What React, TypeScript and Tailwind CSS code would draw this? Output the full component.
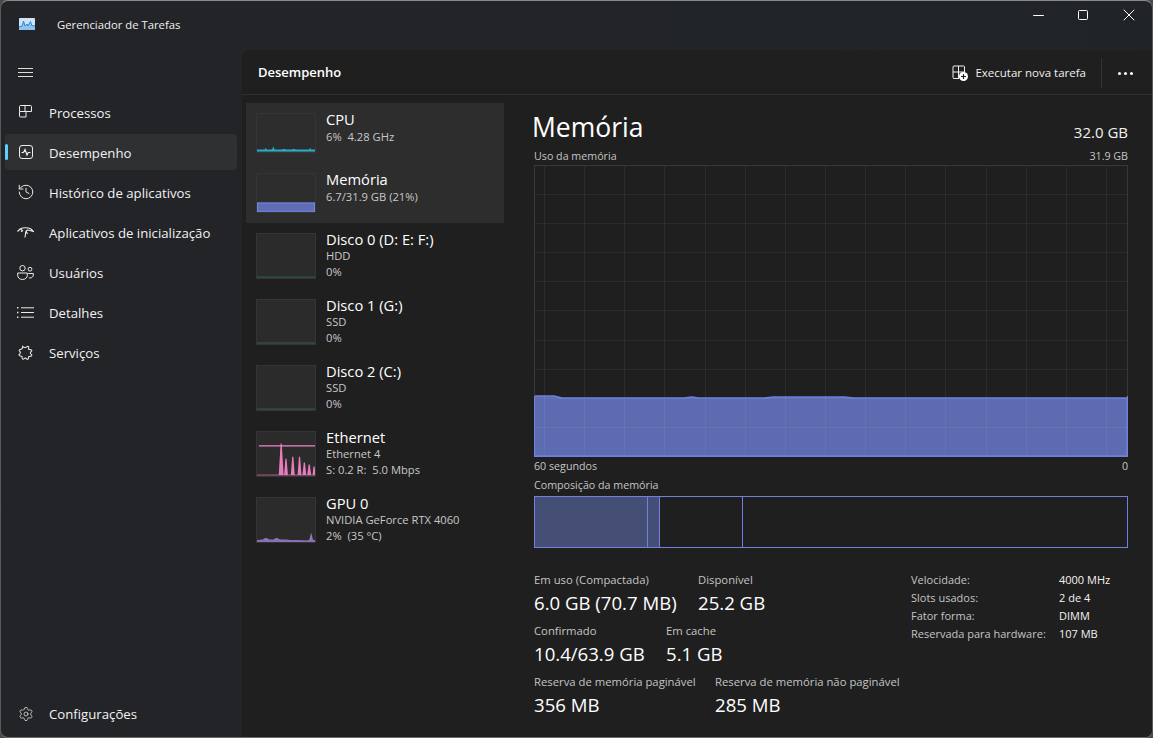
import React from "react";
import { History, Settings, Minus, X } from "lucide-react";

const font = "font-['Open_Sans','Noto_Sans',sans-serif]";

// Sidebar icons that lucide does not have in this shape
const ProcessIcon = () => (
  <svg width="13" height="13" viewBox="0 0 13 13" fill="none" stroke="currentColor" strokeWidth="1" className="mb-[1px]">
    <path d="M.5 6.5v-5a1 1 0 0 1 1-1H6v6zM6 .5h5.5a1 1 0 0 1 1 1v5H6M.5 6.5V11a1 1 0 0 0 1 1H7V6.5" />
  </svg>
);

const PerfIcon = () => (
  <svg width="14" height="14" viewBox="0 0 14 14" fill="none" stroke="currentColor" strokeWidth="1">
    <rect x=".5" y=".5" width="13" height="13" rx="2.5" />
    <path d="M2.5 7.5h2l1.5-3 2 5.5 1.3-2.5h2.2" strokeWidth="1.2" />
  </svg>
);

const StartupIcon = () => (
  <svg width="17" height="11" viewBox="0 0 17 11" fill="none" stroke="currentColor" strokeWidth="1.1">
    <path d="M.5 4.5 3 2C6 .3 11 .3 14 2l2.5 2.5-3.5-.9C11 2.6 9.3 3 8.8 4.6L8 10.5M9.2 4.5l1.3 2.6" />
    <path d="M3.5 2 5.5 3.8 4 4.8" />
  </svg>
);

const UsersIcon = () => (
  <svg width="17" height="15" viewBox="0 0 17 15" fill="none" stroke="currentColor" strokeWidth="1">
    <circle cx="5.5" cy="3.2" r="2.7" />
    <circle cx="13" cy="4.2" r="1.9" />
    <path d="M.7 8h9.6v2.3c0 2.4-2 4.2-4.8 4.2S.7 12.7.7 10.3zM11.3 8.5h5V10c0 1.7-1.5 3-3.4 3-.4 0-.8 0-1.1-.2" />
  </svg>
);

const DetailsIcon = () => (
  <svg width="17" height="11" viewBox="0 0 17 11" fill="none" stroke="currentColor">
    <path d="M4 .8h13M4 5.5h13M4 10.2h13" />
    <path d="M0 .8h1.4M0 5.5h1.4M0 10.2h1.4" strokeWidth="1.6" />
  </svg>
);

const ServicesIcon = () => (
  <svg width="15" height="15" viewBox="0 0 16 16" fill="none" stroke="currentColor" strokeWidth="1.1">
    <path d="M5 1.5c.7.9 1.7 1.4 3 1.2l2.6-1.2.9.5-.3 2.4c.4.6 2 .7 3 .8l.6 1c-.6.8-1.6 1.3-1.6 2.3s1 1.4 1.6 2.2l-.5 1-2.9.8-.4 2.4-1 .4-2-1.4c-.6-.2-1.4.6-2.4 1.3l-1-.4-.4-2.6-2.7-.8-.5-1C1.6 9.400 2.600 9 2.600 8.100S1.700 6.600 1.200 5.900l.5-1 2.700-.8z" />
  </svg>
);

const NewTaskIcon = () => (
  <svg width="16" height="16" viewBox="0 0 16 16" fill="none">
    <path d="M1 7V2a1 1 0 0 1 1-1h9.5a1 1 0 0 1 1 1v5M1 7h11.5M1 7v5.5a1 1 0 0 0 1 1h5M6.5 1v12.5" stroke="currentColor" />
    <circle cx="11.5" cy="11.5" r="4.5" fill="#fff" />
    <path d="M11.5 9v5M9 11.5h5" stroke="#1f1f1f" strokeWidth="1.2" />
  </svg>
);

const AppLogo = () => (
  <svg width="16" height="12" viewBox="0 0 16 12">
    <rect width="16" height="12" fill="#cfe4f5" rx="1" />
    <path d="M0 9 3 8l1.5-5L6 8l2-2 1 2 2.5-4.5L13 8l3-.5V12H0z" fill="#8ec5ee" />
    <path d="M0 9 3 8l1.5-5L6 8l2-2 1 2 2.5-4.5L13 8l3-.5" fill="none" stroke="#2f87d8" strokeWidth="1" />
  </svg>
);

const navItems = [
  { label: "Processos", icon: <ProcessIcon /> },
  { label: "Desempenho", icon: <PerfIcon />, active: true },
  { label: "Histórico de aplicativos", icon: <History size={18} strokeWidth={1.3} /> },
  { label: "Aplicativos de inicialização", icon: <StartupIcon /> },
  { label: "Usuários", icon: <UsersIcon /> },
  { label: "Detalhes", icon: <DetailsIcon /> },
  { label: "Serviços", icon: <ServicesIcon /> },
];

function Thumb({
  h,
  children,
  line,
  clear,
}: {
  h: string;
  children?: React.ReactNode;
  line: string;
  clear?: boolean;
}) {
  return (
    <div className={`w-[60px] ${h} shrink-0 border border-[#353535] ${clear ? "" : "bg-[#2b2b2b]"}`}>
      <svg className="block h-full w-full" viewBox="0 0 60 46" preserveAspectRatio="none">
        {children}
        <path d="M0 45h60" stroke={line} strokeWidth="1" opacity="0.7" />
      </svg>
    </div>
  );
}

const ethSpikes = [
  [25, 12, 2.5],
  [30, 28, 2],
  [37, 26, 2],
  [44, 26, 2],
  [49, 32, 2],
  [54, 34, 2],
  [59, 36, 1.5],
];

const rows = [
  {
    title: "CPU",
    lines: ["6%  4.28 GHz"],
    selected: true,
    h: "h-[60px]",
    thumbH: "h-[40px]",
    line: "#2fb4d0",
    shape: <path d="M0 45V43h8l1-2 1 2h5l1-1 1-3 1 4h8l2-1 2 1h6l2-1 2 1h14l1-2 1 2h4v2z" fill="#2fa9c6" />,
  },
  {
    title: "Memória",
    lines: ["6.7/31.9 GB (21%)"],
    selected: true,
    h: "h-[60px]",
    thumbH: "h-[40px]",
    line: "#7484e0",
    shape: <rect x="0.5" y="35" width="59" height="11" fill="#5f6db3" stroke="#7484e0" strokeWidth="1.4" />,
  },
  { title: "Disco 0 (D: E: F:)", lines: ["HDD", "0%"], line: "#3d7a6a" },
  { title: "Disco 1 (G:)", lines: ["SSD", "0%"], line: "#3d7a6a" },
  { title: "Disco 2 (C:)", lines: ["SSD", "0%"], line: "#3d7a6a" },
  {
    title: "Ethernet",
    lines: ["Ethernet 4", "S: 0.2 R:  5.0 Mbps"],
    line: "#e77dbd",
    shape: (
      <>
        {ethSpikes.map(([x, top, w]) => (
          <path key={x} d={`M${x - w} 45L${x - 0.6} ${top}h1.2L${x + w} 45z`} fill="#e77dbd" />
        ))}
        <path d="M2 14.5h58" stroke="#f285cb" strokeWidth="1.5" />
      </>
    ),
  },
  {
    title: "GPU 0",
    lines: ["NVIDIA GeForce RTX 4060", "2%  (35 °C)"],
    line: "#7d6aa8",
    shape: <path d="M0 46V44l6-.5 3-2 4 2 4 0 3-2 4 2 6 0 5 .5 8 0 8 .5 3-.5 2-8 2 8h2v2z" fill="#8e75bd" />,
  },
];

const AREA =
  "M0 231 L20 231 L24 232 L28 233 L150 233 L158 232 L164 233 L230 233 L240 232 L310 232 L320 233 L593 233 L593 291 L0 291 Z";

function MemChart() {
  const vs = [10, 50, 90, 130, 171, 211, 251, 291, 331, 371, 411, 452, 492, 532, 572];
  const hs = [29, 58, 87, 116, 145, 175, 204, 233, 262];
  return (
    <svg className="block h-[292px] w-full" viewBox="0 0 594 292">
      <rect width="594" height="292" fill="#1f1f1f" />
      <path d={AREA} fill="#5d6bb0" />
      {vs.map((x) => (
        <path key={x} d={`M${x + 0.5} 0V292`} stroke="#ffffff" strokeOpacity="0.055" />
      ))}
      {hs.map((y) => (
        <path key={y} d={`M0 ${y + 0.5}H594`} stroke="#ffffff" strokeOpacity="0.055" />
      ))}
      <path d={AREA} fill="none" stroke="#7080dc" strokeWidth="1.4" />
      <rect x="0.5" y="0.5" width="593" height="291" fill="none" stroke="#383838" />
      <path d="M0.5 231V291.5H593.5V231" fill="none" stroke="#7080dc" strokeWidth="1.2" />
    </svg>
  );
}

function Stat({ label, value, w }: { label: string; value: string; w: string }) {
  return (
    <div className={w}>
      <div className="text-[11.3px] leading-[16px] whitespace-nowrap text-[#c4c4c4]">{label}</div>
      <div className="mt-[3px] text-[18.6px] leading-[24px] whitespace-nowrap text-white">{value}</div>
    </div>
  );
}

const specs = [
  ["Velocidade:", "4000 MHz"],
  ["Slots usados:", "2 de 4"],
  ["Fator forma:", "DIMM"],
  ["Reservada para hardware:", "107 MB"],
];

export default function App() {
  return (
    <div className={`${font} h-[738px] w-[1153px] overflow-hidden bg-[#4a4a4a]`}>
      <div className="flex h-full w-full flex-col overflow-hidden rounded-[8px] border border-x-[#5a5a5a] border-t-[#8a8a8a] border-b-[#6a6a6a] bg-gradient-to-r from-[#232427] to-[#202428] text-white">
        {/* title bar */}
        <div className="flex h-[49px] shrink-0 items-start">
          <div className="mt-[17px] ml-[18px]">
            <AppLogo />
          </div>
          <div className="mt-[15px] ml-[22px] text-[11.3px] leading-[18px] text-[#f0f0f0]">Gerenciador de Tarefas</div>
          <div className="ml-auto flex items-center pt-[4px]">
            <Minus size={17} strokeWidth={1.4} className="mr-[31px]" />
            <div className="mr-[31px] h-[10px] w-[10px] rounded-[1.5px] border border-white" />
            <X size={20} strokeWidth={1.2} className="mr-[13px]" />
          </div>
        </div>

        <div className="flex min-h-0 flex-1">
          {/* nav */}
          <nav className="flex w-[241px] shrink-0 flex-col">
            <div className="mt-[14px] ml-[17px] flex h-[16px] w-[15px] flex-col justify-center gap-[3px]">
              <div className="h-px bg-[#dcdcdc]" />
              <div className="h-px bg-[#dcdcdc]" />
              <div className="h-px bg-[#dcdcdc]" />
            </div>
            <div className="mt-[14px] flex flex-col gap-[4px] pr-[5px] pl-[4px]">
              {navItems.map((it) => (
                <div
                  key={it.label}
                  className={`relative flex h-[36px] items-center rounded-[4px] ${it.active ? "bg-[#2f3032]" : ""}`}
                >
                  {it.active && <div className="absolute top-[10px] left-0 h-[16px] w-[3px] rounded-full bg-[#60cdff]" />}
                  <div className="mr-[3px] flex w-[41px] justify-center text-[#ececec]">{it.icon}</div>
                  <span className="pt-[3px] text-[13.2px] text-[#f2f2f2]">{it.label}</span>
                </div>
              ))}
            </div>
            <div className="mt-auto mb-[5px] flex h-[36px] items-center pl-[4px]">
              <div className="mr-[3px] flex w-[41px] justify-center text-[#ececec]">
                <Settings size={16} strokeWidth={1.1} />
              </div>
              <span className="pt-[1px] text-[13.2px] text-[#f2f2f2]">Configurações</span>
            </div>
          </nav>

          {/* content */}
          <main className="flex min-w-0 flex-1 flex-col rounded-tl-[8px] bg-[#1f1f1f]">
            <header className="flex h-[45px] shrink-0 items-center border-b border-[#2e2e2e] pt-[2px] pl-[16px]">
              <h1 className="text-[13px] font-semibold text-white">Desempenho</h1>
              <div className="ml-auto flex items-center text-[#f0f0f0]">
                <NewTaskIcon />
                <span className="ml-[7px] text-[11.5px]">Executar nova tarefa</span>
                <div className="ml-[15px] h-[30px] w-px bg-[#333333]" />
                <div className="mr-[19px] ml-[16px] flex gap-[3px]">
                  <div className="h-[3px] w-[3px] rounded-full bg-white" />
                  <div className="h-[3px] w-[3px] rounded-full bg-white" />
                  <div className="h-[3px] w-[3px] rounded-full bg-white" />
                </div>
              </div>
            </header>

            <div className="flex min-h-0 flex-1">
              {/* device list */}
              <div className="w-[262px] shrink-0 pt-[8px] pl-[4px]">
                {rows.map((r) => (
                  <div
                    key={r.title}
                    className={`flex ${r.h ?? "h-[66px]"} pt-[10px] pl-[10px] ${r.selected ? "bg-[#2d2d2d]" : ""}`}
                  >
                    <Thumb h={r.thumbH ?? "h-[46px]"} line={r.line} clear={r.selected}>
                      {r.shape}
                    </Thumb>
                    <div className="ml-[10px] min-w-0">
                      <div className={`mt-[-4px] text-[14.7px] leading-[20px] text-white ${r.selected ? "" : "mb-[-1px]"}`}>
                        {r.title}
                      </div>
                      {r.lines.map((l) => (
                        <div key={l} className="text-[11.2px] leading-[16px] whitespace-pre text-[#c8c8c8]">
                          {l}
                        </div>
                      ))}
                    </div>
                  </div>
                ))}
              </div>

              {/* memory detail */}
              <div className="min-w-0 flex-1 pr-[24px] pl-[30px]">
                <div className="flex h-[50px] items-end justify-between pt-[6px]">
                  <h2 className="ml-[-2px] text-[26.5px] leading-[36px] font-normal text-white">Memória</h2>
                  <span className="mb-[3px] text-[15px] leading-[20px] text-[#f2f2f2]">32.0 GB</span>
                </div>
                <div className="flex h-[23px] items-center justify-between text-[10.7px] text-[#c4c4c4]">
                  <span>Uso da memória</span>
                  <span>31.9 GB</span>
                </div>
                <div className="mt-[-3px]">
                  <MemChart />
                </div>
                <div className="mt-[1px] flex h-[16px] items-center justify-between text-[10.7px] text-[#c4c4c4]">
                  <span>60 segundos</span>
                  <span>0</span>
                </div>
                <div className="mt-[3px] flex h-[16px] items-center text-[10.7px] text-[#c4c4c4]">Composição da memória</div>
                <div className="mt-[3px] flex h-[52px] border border-[#7080dc]">
                  <div className="w-[113px] border-r border-[#7080dc] bg-[#454f75]" />
                  <div className="w-[12px] border-r border-[#7080dc] bg-[#454f75]" />
                  <div className="w-[83px] border-r border-[#7080dc]" />
                  <div className="flex-1" />
                </div>

                <div className="mt-[24px] flex justify-between">
                  <div className="flex flex-col gap-[8px]">
                    <div className="flex">
                      <Stat label="Em uso (Compactada)" value="6.0 GB (70.7 MB)" w="w-[164px]" />
                      <Stat label="Disponível" value="25.2 GB" w="w-[90px]" />
                    </div>
                    <div className="flex">
                      <Stat label="Confirmado" value="10.4/63.9 GB" w="w-[132px]" />
                      <Stat label="Em cache" value="5.1 GB" w="w-[90px]" />
                    </div>
                    <div className="flex">
                      <Stat label="Reserva de memória paginável" value="356 MB" w="w-[181px]" />
                      <Stat label="Reserva de memória não paginável" value="285 MB" w="w-[190px]" />
                    </div>
                  </div>
                  <div className="mt-[-1px] mr-[-8px] w-[225px]">
                    {specs.map(([k, v]) => (
                      <div key={k} className="flex h-[18px] items-center text-[11px]">
                        <span className="w-[148px] whitespace-nowrap text-[#c4c4c4]">{k}</span>
                        <span className="text-[#f2f2f2]">{v}</span>
                      </div>
                    ))}
                  </div>
                </div>
              </div>
            </div>
          </main>
        </div>
      </div>
    </div>
  );
}
